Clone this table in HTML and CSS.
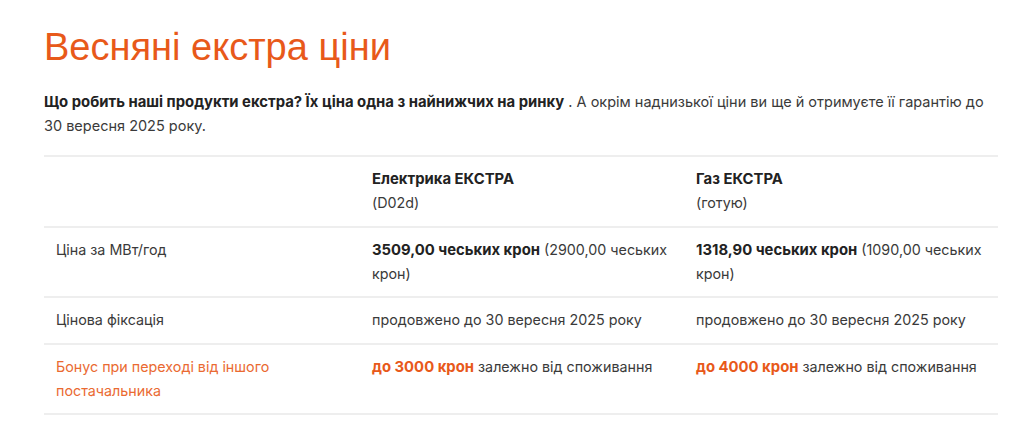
FILE: index.html
```html
<!DOCTYPE html>
<html lang="uk">
<head>
<meta charset="utf-8">
<title>Весняні екстра ціни</title>
<link rel="stylesheet" href="styles.css">
</head>
<body>
<main class="page">
  <h1 class="title">Весняні екстра ціни</h1>
  <p class="intro"><strong>Що робить наші продукти екстра? Їх ціна одна з найнижчих на ринку</strong> . А окрім наднизької ціни ви ще й отримуєте її гарантію до 30 вересня 2025 року.</p>
  <table class="prices">
    <colgroup>
      <col class="c1">
      <col class="c2">
      <col class="c3">
    </colgroup>
    <tr>
      <td></td>
      <td><strong>Електрика ЕКСТРА</strong><br>(D02d)</td>
      <td><strong>Газ ЕКСТРА</strong><br>(готую)</td>
    </tr>
    <tr>
      <td>Ціна за МВт/год</td>
      <td><strong>3509,00 чеських крон</strong> (2900,00 чеських крон)</td>
      <td><strong>1318,90 чеських крон</strong> (1090,00 чеських крон)</td>
    </tr>
    <tr>
      <td>Цінова фіксація</td>
      <td>продовжено до 30 вересня 2025 року</td>
      <td>продовжено до 30 вересня 2025 року</td>
    </tr>
    <tr>
      <td class="accent-label">Бонус при переході від іншого постачальника</td>
      <td><strong class="accent">до 3000 крон</strong> залежно від споживання</td>
      <td><strong class="accent">до 4000 крон</strong> залежно від споживання</td>
    </tr>
  </table>
</main>
</body>
</html>
```

FILE: styles.css
```css
html, body {
  margin: 0;
  padding: 0;
  background: #fff;
}
body {
  font-family: Inter, "Noto Sans", sans-serif;
  color: #3a3a3a;
  font-size: 14.3px;
  line-height: 24px;
}
.page {
  padding: 22px 26px 0 44px;
}
.title {
  font-family: "Liberation Sans", Arial, sans-serif;
  font-weight: 400;
  font-size: 38px;
  line-height: 50px;
  color: #e8591a;
  margin: 0 0 18px;
}
.intro {
  margin: 0 0 17px;
  font-size: 14.5px;
}
.intro strong {
  font-weight: 700;
  font-size: 14.85px;
  color: #222;
}
.prices {
  width: 100%;
  border-collapse: collapse;
  border-top: 2px solid #eee;
}
.prices td {
  vertical-align: top;
  padding: 10px 12px 10.5px;
  border-bottom: 2px solid #eee;
}
.c1 { width: 316px; }
.c2 { width: 324px; }
.prices strong {
  font-weight: 700;
  font-size: 14.85px;
  color: #222;
}
.prices .accent { color: #e8591a; }
.accent-label { color: #ea6a32; }
```
